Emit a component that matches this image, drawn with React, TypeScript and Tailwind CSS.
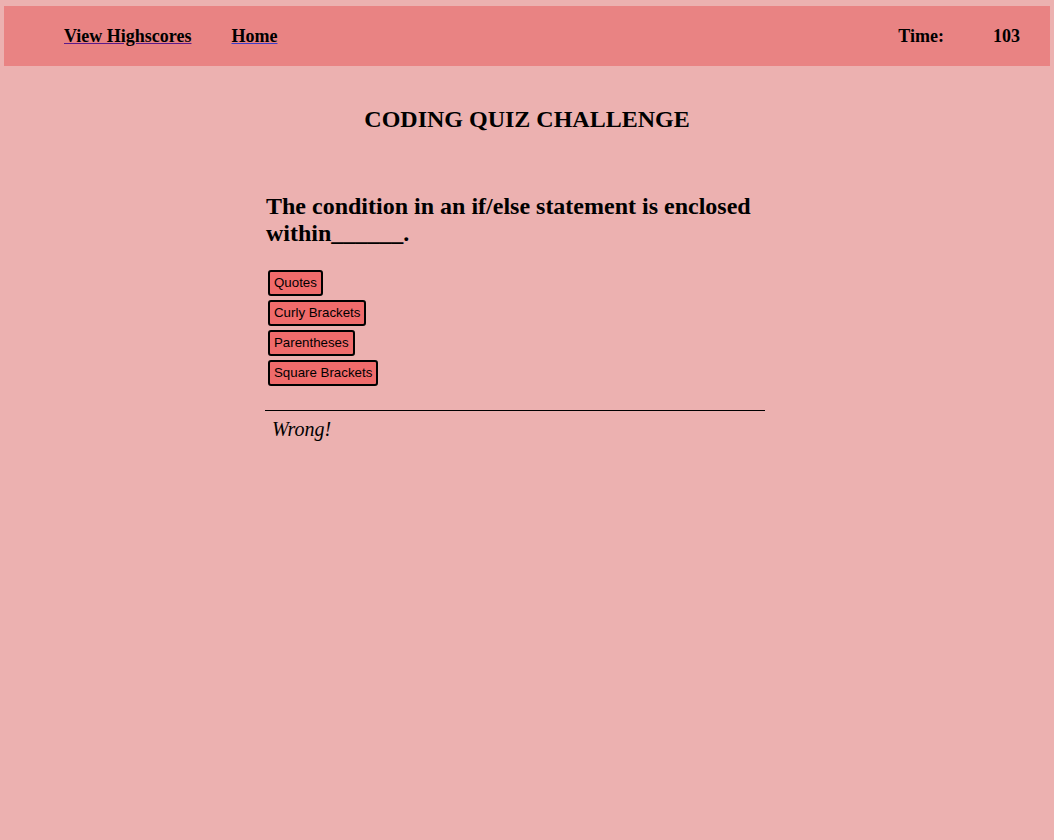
import React from "react";

const answers = ["Quotes", "Curly Brackets", "Parentheses", "Square Brackets"];

export default function App() {
  return (
    <div className="min-h-[840px] bg-[#ecb1b0] px-[4px] pt-[6px] font-['Liberation_Serif',serif] text-black">
      {/* Header */}
      <header className="flex h-[60px] items-center bg-[#e98383] pl-[60px] pr-[30px] pt-[1px] text-[18px] font-bold">
        <a href="#" className="underline decoration-[#5a1a8a]">View Highscores</a>
        <a href="#" className="ml-[40px] underline decoration-[#3c3cc8]">Home</a>
        <div className="ml-auto flex">
          <span>Time:</span>
          <span className="ml-[49px]">103</span>
        </div>
      </header>

      <h1 className="mt-[39px] text-center text-[24px] font-bold leading-[28px]">CODING QUIZ CHALLENGE</h1>

      {/* Quiz */}
      <main className="ml-[261px] mt-[60px] w-[500px]">
        <h2 className="pl-[1px] text-[24px] font-bold leading-[27px]">
          The condition in an if/else statement is enclosed within______.
        </h2>
        <div className="mt-[23px] flex flex-col items-start gap-[4px] pl-[3px]">
          {answers.map((a) => (
            <button
              key={a}
              className="h-[26px] rounded-[3px] border-2 border-black bg-[#f06b6b] px-[4px] font-['Liberation_Sans',sans-serif] text-[13.3px]"
            >
              {a}
            </button>
          ))}
        </div>
        <hr className="mt-[24px] border-black" />
        <p className="mt-[3px] pl-[7px] text-[20px] italic">Wrong!</p>
      </main>
    </div>
  );
}
